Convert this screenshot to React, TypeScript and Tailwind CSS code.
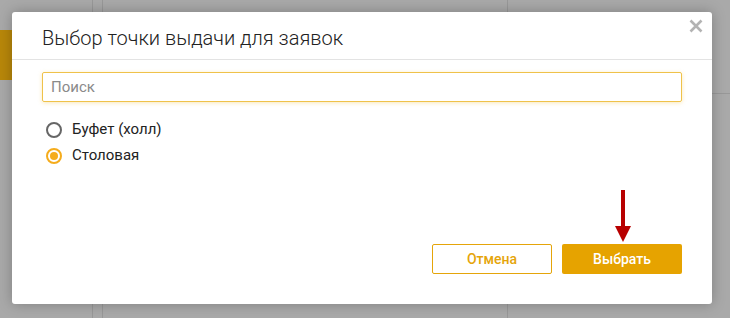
import React from "react";

const options = [
  { id: "buffet", label: "Буфет (холл)" },
  { id: "canteen", label: "Столовая" },
];

export default function App() {
  const [selected, setSelected] = React.useState("canteen");

  return (
    <div className="relative w-[730px] h-[318px] overflow-hidden bg-[#a9a9a9] font-['Roboto',sans-serif]">
      {/* dimmed page behind the dialog */}
      <div className="flex h-full">
        <div className="w-[92px] pt-[30px]">
          <div className="w-[12px] h-[50px] bg-[#b8870a]" />
        </div>
        <div className="w-[10px] border-l border-[#989898]" />
        <div className="w-[405px] border-l border-[#989898]" />
        <div className="flex-1 border-l border-[#989898] flex flex-col">
          <div className="h-[94px] border-b border-[#989898]" />
        </div>
      </div>

      <div className="absolute left-[12px] top-[12px] w-[700px] h-[292px] bg-white rounded-[3px] shadow-[0_0_14px_rgba(0,0,0,0.25)] flex flex-col">
        <div className="h-[48px] border-b border-[#e3e3e3] flex items-center justify-between pl-[30px] pr-[8px]">
          <h2 className="text-[20px] font-light text-[#222] leading-none pt-[4px]">
            Выбор точки выдачи для заявок
          </h2>
          <button className="self-start mt-[6px] text-[#b3b3b3]">
            <svg width="16" height="16" viewBox="0 0 16 16">
              <path d="M2.5 2.5 L13.5 13.5 M13.5 2.5 L2.5 13.5" stroke="currentColor" strokeWidth="2.6" />
            </svg>
          </button>
        </div>

        <div className="flex-1 px-[30px] pt-[12px]">
          <input
            placeholder="Поиск"
            className="w-full h-[30px] border border-[#efc24a] rounded-[2px] px-[8px] text-[15px] text-[#333] placeholder:text-[#8a8a8a] outline-none shadow-[0_1px_4px_rgba(240,190,60,0.35)]"
          />
          <div className="mt-[19px] flex flex-col gap-[9px]">
            {options.map((o) => {
              const on = o.id === selected;
              return (
                <label key={o.id} className="flex items-center gap-[10px] pl-[4px] cursor-pointer" onClick={() => setSelected(o.id)}>
                  <span
                    className={
                      on
                        ? "w-[16px] h-[16px] rounded-full border-2 border-[#f5ac1c] flex items-center justify-center"
                        : "w-[16px] h-[16px] rounded-full border-2 border-[#666] flex items-center justify-center"
                    }
                  >
                    {on && <span className="w-[8px] h-[8px] rounded-full bg-[#f5ac1c]" />}
                  </span>
                  <span className="text-[15px] text-[#222] leading-[17px]">{o.label}</span>
                </label>
              );
            })}
          </div>
        </div>

        <div className="flex justify-end gap-[10px] px-[30px] pb-[30px]">
          <button className="w-[120px] h-[30px] border border-[#e5a50a] rounded-[2px] text-[14px] font-medium text-[#e5a50a]">
            Отмена
          </button>
          <div className="relative">
            <svg className="absolute left-[53px] -top-[54px]" width="16" height="54" viewBox="0 0 16 54">
              <rect x="6" y="0" width="4" height="40" fill="#b80000" />
              <path d="M0 36 L16 36 L8 52 Z" fill="#b80000" />
            </svg>
            <button className="w-[120px] h-[30px] rounded-[2px] bg-[#e6a300] text-[14px] font-medium text-white">
              Выбрать
            </button>
          </div>
        </div>
      </div>
    </div>
  );
}
